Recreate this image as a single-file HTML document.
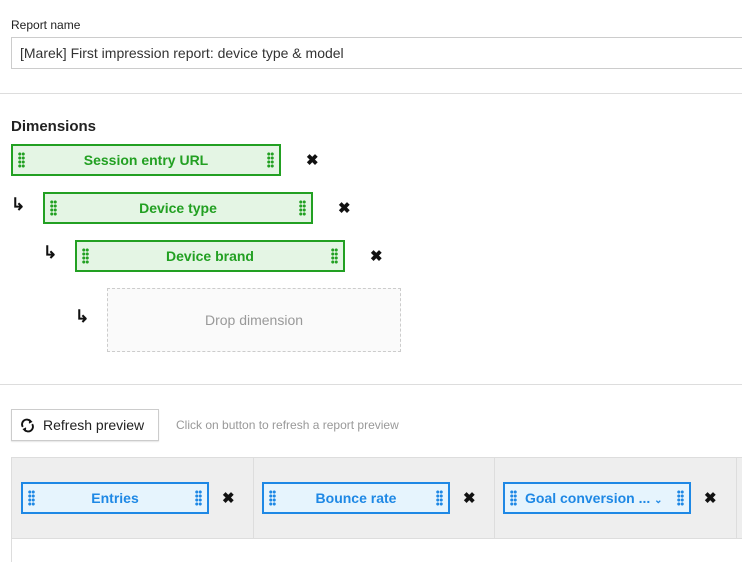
<!DOCTYPE html>
<html><head><meta charset="utf-8"><style>
*{box-sizing:border-box;margin:0;padding:0}
body{width:742px;height:562px;overflow:hidden;background:#fff;font-family:"Liberation Sans",Arial,sans-serif;position:relative;color:#222}
.a{position:absolute}
.lbl{left:11px;top:18px;font-size:12px;color:#222}
.inp{left:11px;top:37px;width:740px;height:32px;border:1px solid #ccc;font-size:14px;padding:7px 8px;color:#333}
.hr{left:0;width:742px;height:1px;background:#ddd}
.h{left:11px;top:118px;font-size:15px;font-weight:bold;color:#222}
.g{height:32px;border:2px solid #22a022;background:#e4f5e4;color:#22a022;font-weight:bold;font-size:14px;text-align:center;line-height:28px}
.b{height:32px;border:2px solid #1e88e5;background:#e6f4fd;color:#1e88e5;font-weight:bold;font-size:14px;text-align:center;line-height:28px}
.grip{position:absolute;top:6px;width:7px;height:16px;background-image:radial-gradient(circle,currentColor 1.4px,transparent 1.7px);background-size:3.5px 4px}
.x{font-size:15px;font-weight:bold;color:#111}
.arr{font-size:17px;font-weight:bold;color:#111}
.drop{left:107px;top:288px;width:294px;height:64px;border:1px dashed #ccc;background:#fafafa;color:#999;font-size:14px;text-align:center;line-height:62px}
.btn{left:11px;top:409px;width:148px;height:32px;border:1px solid #ccc;font-size:14px;line-height:30px;padding-left:31px;color:#222;box-shadow:0 1px 1px rgba(0,0,0,.1)}
.hint{left:176px;top:418px;font-size:12px;color:#999}
.th{left:11px;top:457px;width:740px;height:82px;background:#eee;border:1px solid #ddd}
.sep{top:457px;width:1px;height:82px;background:#ddd}
</style></head><body>
<div class="a lbl">Report name</div>
<div class="a inp">[Marek] First impression report: device type &amp; model</div>
<div class="a hr" style="top:93px"></div>
<div class="a h">Dimensions</div>

<div class="a g" style="left:11px;top:144px;width:270px"><span class="grip" style="left:5px"></span>Session entry URL<span class="grip" style="right:5px"></span></div>
<div class="a x" style="left:306px;top:151px">✖</div>

<div class="a arr" style="left:11px;top:195px">↳</div>
<div class="a g" style="left:43px;top:192px;width:270px"><span class="grip" style="left:5px"></span>Device type<span class="grip" style="right:5px"></span></div>
<div class="a x" style="left:338px;top:199px">✖</div>

<div class="a arr" style="left:43px;top:243px">↳</div>
<div class="a g" style="left:75px;top:240px;width:270px"><span class="grip" style="left:5px"></span>Device brand<span class="grip" style="right:5px"></span></div>
<div class="a x" style="left:370px;top:247px">✖</div>

<div class="a arr" style="left:75px;top:307px">↳</div>
<div class="a drop">Drop dimension</div>

<div class="a hr" style="top:384px"></div>

<div class="a btn">Refresh preview
<svg class="a" style="left:8px;top:8px" width="15" height="15" viewBox="0 0 16 16" fill="none" stroke="#111" stroke-width="2"><path d="M3 9.5A5 5 0 0 1 11.5 4"/><path d="M13 6.5A5 5 0 0 1 4.5 12"/><path d="M10 1.5l2.5 2.5-3 1.5" fill="#111" stroke-width="1"/><path d="M6 14.5L3.5 12l3-1.5" fill="#111" stroke-width="1"/></svg>
</div>
<div class="a hint">Click on button to refresh a report preview</div>

<div class="a th"></div>
<div class="a sep" style="left:253px"></div>
<div class="a sep" style="left:494px"></div>
<div class="a sep" style="left:736px"></div>
<div class="a" style="left:11px;top:539px;width:1px;height:23px;background:#ddd"></div>

<div class="a b" style="left:21px;top:482px;width:188px"><span class="grip" style="left:5px"></span>Entries<span class="grip" style="right:5px"></span></div>
<div class="a x" style="left:222px;top:489px">✖</div>
<div class="a b" style="left:262px;top:482px;width:188px"><span class="grip" style="left:5px"></span>Bounce rate<span class="grip" style="right:5px"></span></div>
<div class="a x" style="left:463px;top:489px">✖</div>
<div class="a b" style="left:503px;top:482px;width:188px;text-align:left;padding-left:20px"><span class="grip" style="left:5px"></span>Goal conversion ... <span style="font-size:10px">⌄</span><span class="grip" style="right:5px"></span></div>
<div class="a x" style="left:704px;top:489px">✖</div>
</body></html>
